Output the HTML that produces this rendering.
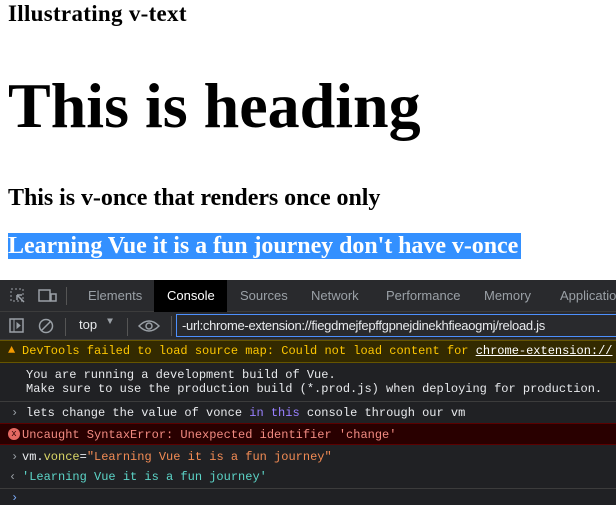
<!DOCTYPE html>
<html><head><style>
*{margin:0;padding:0;box-sizing:border-box}
body{width:616px;height:505px;overflow:hidden;background:#fff;font-family:"Liberation Serif",serif;position:relative}
.a{position:absolute;white-space:nowrap}
.dt{position:absolute;left:0;top:280px;width:616px;height:225px;background:#202124;font-family:"Liberation Mono",monospace;font-size:12px;color:#e8eaed}
.tabs{position:absolute;left:0;top:0;width:616px;height:32px;background:#292a2d;border-bottom:1px solid #3c3c3c;font-family:"Liberation Sans",sans-serif;font-size:13px;color:#9aa0a6}
.tb{position:absolute;top:0;width:616px;height:28px;background:#292a2d;border-bottom:1px solid #3c3c3c}
.row{position:absolute;left:0;width:616px;white-space:nowrap}
</style></head><body>
<div class="a" style="left:8px;top:1px;font-size:23px;font-weight:bold;letter-spacing:0.3px">Illustrating v-text</div>
<div class="a" style="left:8px;top:68px;font-size:64px;font-weight:bold;line-height:76px">This is heading</div>
<div class="a" style="left:8px;top:185px;font-size:24px;font-weight:bold;letter-spacing:-0.05px">This is v-once that renders once only</div>
<div class="a" style="left:8px;top:233px;height:26px;width:513px;background:#3390ff;color:#fff;font-size:24px;font-weight:bold;line-height:26px;letter-spacing:-0.05px">Learning Vue it is a fun journey don't have v-once</div>
<div class="dt">
 <div class="tabs">
  <svg class="a" style="left:10px;top:8px" width="16" height="16"><rect x="1" y="1" width="12" height="12" fill="none" stroke="#9aa0a6" stroke-dasharray="2 2"/><path d="M7 7l7 7M7 7h5M7 7v5" stroke="#9aa0a6" stroke-width="1.5"/></svg>
  <svg class="a" style="left:38px;top:8px" width="20" height="16"><rect x="1" y="2" width="11" height="11" fill="none" stroke="#9aa0a6" stroke-width="1.5"/><rect x="13" y="6" width="5" height="7" fill="none" stroke="#9aa0a6" stroke-width="1.5"/></svg>
  <div class="a" style="left:66px;top:7px;width:1px;height:18px;background:#555"></div>
  <div class="a" style="left:88px;top:8px">Elements</div>
  <div class="a" style="left:154px;top:0;width:73px;height:32px;background:#000;color:#fff;padding:8px 0 0 13px">Console</div>
  <div class="a" style="left:240px;top:8px">Sources</div>
  <div class="a" style="left:311px;top:8px">Network</div>
  <div class="a" style="left:386px;top:8px">Performance</div>
  <div class="a" style="left:484px;top:8px">Memory</div>
  <div class="a" style="left:560px;top:8px">Application</div>
 </div>
 <div class="tb" style="top:32px">
  <svg class="a" style="left:9px;top:6px" width="16" height="16"><rect x="1" y="1" width="13" height="13" fill="none" stroke="#9aa0a6" stroke-width="1.5"/><path d="M5 1v13M8 5l3 2.5-3 2.5z" stroke="#9aa0a6" fill="#9aa0a6"/></svg>
  <svg class="a" style="left:38px;top:6px" width="16" height="16"><circle cx="8" cy="8" r="6.5" fill="none" stroke="#9aa0a6" stroke-width="1.5"/><path d="M3.5 12.5l9-9" stroke="#9aa0a6" stroke-width="1.5"/></svg>
  <div class="a" style="left:65px;top:6px;width:1px;height:18px;background:#555"></div>
  <div class="a" style="left:79px;top:5px;font-family:'Liberation Sans',sans-serif;font-size:13px;color:#e8eaed">top</div>
  <div class="a" style="left:107px;top:5px;font-size:10px;color:#9aa0a6">▼</div>
  <div class="a" style="left:127px;top:6px;width:1px;height:18px;background:#555"></div>
  <svg class="a" style="left:138px;top:6px" width="22" height="16"><path d="M1 8Q11 -2 21 8Q11 18 1 8z" fill="none" stroke="#9aa0a6" stroke-width="1.5"/><circle cx="11" cy="8" r="3" fill="none" stroke="#9aa0a6" stroke-width="1.5"/></svg>
  <div class="a" style="left:171px;top:4px;width:1px;height:20px;background:#555"></div>
  <div class="a" style="left:176px;top:2px;width:450px;height:23px;border:1px solid #4d90fe;font-family:'Liberation Sans',sans-serif;font-size:13px;color:#e8eaed;padding:3px 0 0 5px;letter-spacing:-0.3px">-url:chrome-extension://fiegdmejfepffgpnejdinekhfieaogmj/reload.js</div>
 </div>
 <div class="row" style="top:60px;height:23px;background:#332a00;border-top:1px solid #665500;border-bottom:1px solid #665500;color:#fdc600;padding:3px 0 0 22px"><span style="position:absolute;left:8px;top:2px;color:#f29900">▲</span>DevTools failed to load source map: Could not load content for <span style="color:#fff;text-decoration:underline">chrome-extension://</span></div>
 <div class="row" style="top:88px;padding-left:26px;line-height:14px">You are running a development build of Vue.<br>Make sure to use the production build (*.prod.js) when deploying for production.</div>
 <div class="row" style="top:121px;height:1px;background:#3c3c3c"></div>
 <div class="row" style="top:126px;padding-left:26px"><span style="position:absolute;left:11px;color:#9aa0a6">›</span>lets  change the value of vonce <span style="color:#9980ff">in this</span> console through our vm</div>
 <div class="row" style="top:143px;height:22px;background:#290000;border-top:1px solid #5c0000;border-bottom:1px solid #5c0000;color:#f28b82;padding:4px 0 0 22px"><span style="position:absolute;left:8px;top:4px;width:12px;height:12px;border-radius:50%;background:#e46962;color:#290000;font-size:9px;line-height:12px;text-align:center">x</span>Uncaught SyntaxError: Unexpected identifier 'change'</div>
 <div class="row" style="top:170px;padding-left:22px"><span style="position:absolute;left:11px;color:#9aa0a6">›</span>vm.<span style="color:#d9d566">vonce</span>=<span style="color:#f28b54">"Learning Vue it is a fun journey"</span></div>
 <div class="row" style="top:190px;padding-left:22px;color:#5cd5c8"><span style="position:absolute;left:9px;color:#9aa0a6">‹</span>'Learning Vue it is a fun journey'</div>
 <div class="row" style="top:208px;height:1px;background:#3c3c3c"></div>
 <div class="row" style="top:211px;padding-left:11px;color:#7cacf8">›</div>
</div>
</body></html>
